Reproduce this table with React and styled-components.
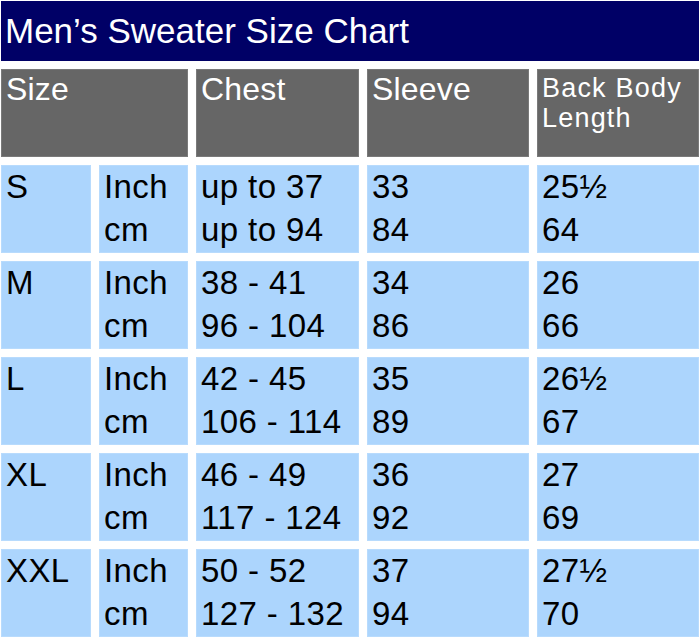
import React from 'react';
import styled, { createGlobalStyle } from 'styled-components';

const GlobalStyle = createGlobalStyle`
	body {
		margin: 0;
		background: #ffffff;
		font-family: "Liberation Sans", Arial, sans-serif;
	}
`;

const Page = styled.div`
	width: 700px;
	height: 638px;
	padding: 1px 1px 0 1px;
	box-sizing: border-box;
	display: flex;
	flex-direction: column;
	gap: 8px;
`;

const TitleBar = styled.div`
	height: 60px;
	background: #000066;
	color: #ffffff;
	font-size: 35px;
	line-height: 60px;
	padding-left: 4px;
	white-space: nowrap;
`;

const Chart = styled.div`
	display: grid;
	grid-template-columns: 90px 89px 163px 162px 162px;
	grid-auto-rows: 88px;
	gap: 8px;
`;

const HeadCell = styled.div`
	grid-column: span ${(p) => p.span || 1};
	background: #666666;
	box-shadow: inset 0 0 0 1px #7a7a7a;
	color: #ffffff;
	padding: ${(p) => (p.small ? '4px 5px 0' : '2px 5px 0')};
	font-size: ${(p) => (p.small ? '27px' : '32px')};
	line-height: ${(p) => (p.small ? '30px' : '37px')};
	letter-spacing: ${(p) => (p.small ? '1.2px' : '0.2px')};
`;

const Cell = styled.div`
	background: #acd5fd;
	box-shadow: inset 0 0 0 1px #b8dbfd;
	color: #000000;
	padding: 0 5px;
	font-size: 33px;
	line-height: 43px;
	letter-spacing: 0.4px;
	white-space: nowrap;
`;

const rows = [
	{ size: 'S', chest: ['up to 37', 'up to 94'], sleeve: ['33', '84'], back: ['25½', '64'] },
	{ size: 'M', chest: ['38 - 41', '96 - 104'], sleeve: ['34', '86'], back: ['26', '66'] },
	{ size: 'L', chest: ['42 - 45', '106 - 114'], sleeve: ['35', '89'], back: ['26½', '67'] },
	{ size: 'XL', chest: ['46 - 49', '117 - 124'], sleeve: ['36', '92'], back: ['27', '69'] },
	{ size: 'XXL', chest: ['50 - 52', '127 - 132'], sleeve: ['37', '94'], back: ['27½', '70'] },
];

const Lines = ({ values }) => (
	<Cell>
		{values[0]}
		<br />
		{values[1]}
	</Cell>
);

export default function App() {
	return (
		<>
			<GlobalStyle />
			<Page>
				<TitleBar>Men’s Sweater Size Chart</TitleBar>
				<Chart>
					<HeadCell span={2}>Size</HeadCell>
					<HeadCell>Chest</HeadCell>
					<HeadCell>Sleeve</HeadCell>
					<HeadCell small>
						Back Body
						<br />
						Length
					</HeadCell>
					{rows.map((row) => (
						<React.Fragment key={row.size}>
							<Cell>{row.size}</Cell>
							<Lines values={['Inch', 'cm']} />
							<Lines values={row.chest} />
							<Lines values={row.sleeve} />
							<Lines values={row.back} />
						</React.Fragment>
					))}
				</Chart>
			</Page>
		</>
	);
}
